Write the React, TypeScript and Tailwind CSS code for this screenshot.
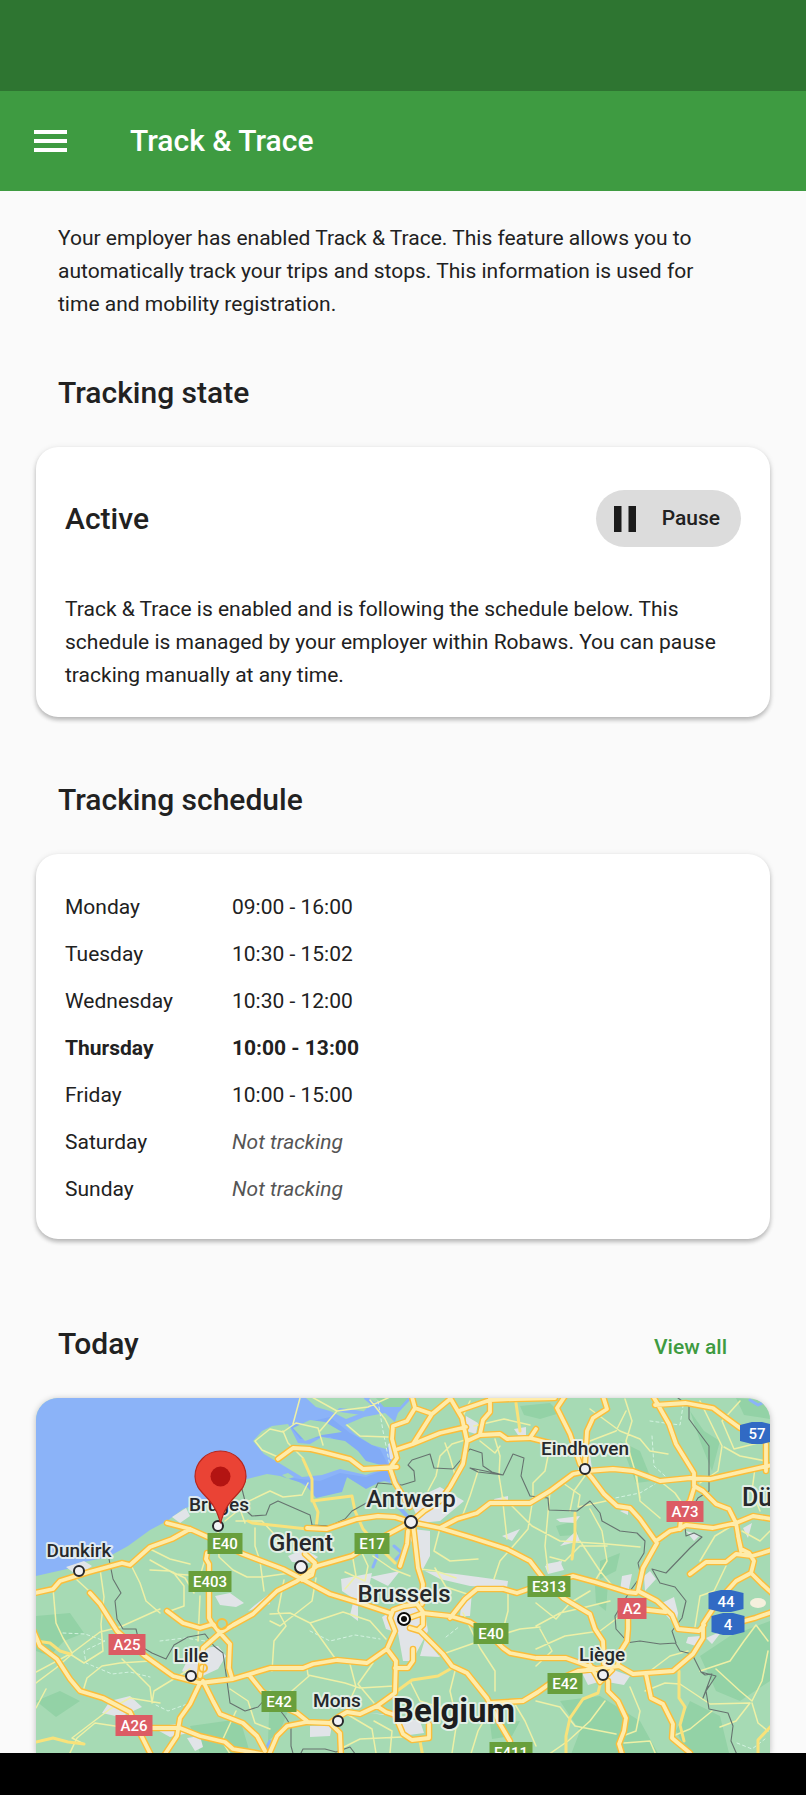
const card = "mt-[36px] rounded-[22px] bg-white px-[29px] shadow-[0_3px_4px_rgba(0,0,0,0.22),0_1px_6px_rgba(0,0,0,0.1)]";
const heading = "text-[30px] leading-[36px] font-medium";

const schedule = [
  { day: "Monday", hours: "09:00 - 16:00" },
  { day: "Tuesday", hours: "10:30 - 15:02" },
  { day: "Wednesday", hours: "10:30 - 12:00" },
  { day: "Thursday", hours: "10:00 - 13:00", today: true },
  { day: "Friday", hours: "10:00 - 15:00" },
  { day: "Saturday", hours: null },
  { day: "Sunday", hours: null },
];

const motorways = [
  "M30 1593L53 1588L60 1580L89 1571L122 1562L130 1564L150 1546L172 1538L190 1528",
  "M167 1522L190 1528L210 1537L243 1553L283 1568L300 1577L330 1593L363 1603L390 1612",
  "M207 1552L206 1558L209 1563V1617L213 1624",
  "M411 1521L383 1536L352 1555L317 1565L297 1580L277 1590L253 1613L233 1624L220 1632L203 1647L200 1675",
  "M305 1553L315 1562L312 1574L302 1579",
  "M167 1610L183 1622L200 1627L213 1623L220 1632L230 1643L229 1667L232 1677",
  "M90 1592L100 1603L117 1630L145 1655L173 1675L200 1682L233 1678L270 1667H303L313 1663L337 1659L367 1662L387 1648",
  "M30 1622L40 1645L57 1658L70 1678L80 1690L103 1697L130 1711L140 1732L152 1756",
  "M200 1682L190 1703L180 1717L177 1735L163 1756",
  "M146 1727H180L200 1735L225 1741L233 1748L262 1753",
  "M203 1680L213 1700L220 1713L243 1722L257 1735L265 1750",
  "M250 1675L262 1690L277 1703L297 1712L307 1720",
  "M268 1756L277 1735L287 1725L307 1721L330 1722L340 1715L347 1711L360 1713L377 1705L395 1692L396 1660L387 1648L395 1630L390 1617L393 1609L404 1605L417 1603L423 1611V1624L418 1629",
  "M330 1722L340 1732L341 1756",
  "M377 1705L386 1711L395 1714L403 1733L412 1739L429 1737V1723",
  "M395 1667H408L413 1660V1648",
  "M412 1616L423 1612L450 1615L470 1621L490 1634L503 1647L510 1652L536 1657H566L580 1662L596 1668L619 1665L633 1673L646 1672L673 1670L693 1653L703 1637L703 1623L718 1600L736 1580L751 1572L754 1560L749 1552L741 1548L738 1535",
  "M751 1572L762 1583L772 1592",
  "M690 1573L706 1561L726 1561L736 1553L752 1555L772 1549",
  "M410 1627L420 1630L443 1653L452 1665L467 1672L487 1697L500 1723L510 1740",
  "M490 1702L523 1700L538 1691L552 1681L578 1670L596 1668",
  "M413 1523L418 1567L423 1583L422 1603",
  "M408 1530L407 1543L400 1565",
  "M450 1617L465 1598L477 1588H503L517 1592L537 1585L573 1575L595 1581L627 1591L636 1592",
  "M411 1521L440 1527L457 1518L477 1512L490 1502H530L550 1490L573 1473L587 1470L613 1468L633 1470L660 1480L690 1477L710 1478L745 1470L772 1464",
  "M440 1527L473 1537L507 1548L530 1560L543 1577L563 1597L590 1613L595 1628L603 1640L604 1663",
  "M603 1395L607 1408L593 1417L587 1430L585 1462",
  "M565 1395L557 1407L570 1433L580 1463L592 1477L604 1493L617 1505L630 1507L640 1518L657 1542L643 1567L638 1590L657 1600L672 1614L678 1628L699 1630L704 1624",
  "M656 1540L670 1530L679 1528L686 1524L713 1527L736 1522L753 1515L772 1518",
  "M653 1395L669 1423L676 1443L694 1472V1485L703 1490L716 1503L729 1508L736 1522L739 1540L741 1550",
  "M694 1487L690 1500L682 1508L680 1528",
  "M655 1404L686 1402L713 1407L725 1416L740 1427",
  "M766 1443V1470",
  "M449 1395L462 1417L467 1440L463 1463L450 1486L440 1500L424 1510L411 1521",
  "M467 1440L480 1434L500 1433L507 1438L530 1437L550 1442",
  "M530 1437L536 1428",
  "M490 1395V1411L483 1419L480 1433",
  "M461 1409L490 1399L515 1398L555 1397",
  "M412 1396L415 1407L407 1420L393 1425L392 1438L397 1457L390 1467L395 1482L410 1506",
  "M450 1398L432 1413L415 1407",
  "M432 1413L413 1443L398 1448",
  "M413 1443L440 1432L466 1426",
  "M278 1458L293 1447L310 1448L323 1451L350 1458L363 1468L397 1466",
  "M307 1527L327 1528L357 1518L378 1515L395 1516L411 1521",
  "M608 1680V1690L618 1700L626 1717L624 1730L619 1743L623 1756",
  "M646 1673L651 1697L663 1703L673 1723L672 1737L690 1752",
  "M628 1610V1628L627 1640L619 1653L618 1664",
  "M640 1608L666 1611",
  "M590 1664L596 1674L600 1681L612 1669",
  "M740 1621L755 1617L772 1611",
];

const regional = [
  "M248 1520L252 1522L280 1525L307 1528",
  "M303 1458L312 1478V1500L352 1495L355 1510L363 1528L378 1545L395 1562",
  "M314 1502L318 1511L316 1527",
  "M575 1512V1535L572 1558",
  "M516 1402L520 1430",
  "M600 1684L598 1692L583 1698L570 1717L566 1735V1756",
  "M679 1670V1697L685 1706L680 1724L684 1740",
  "M36 1741L53 1737L68 1741L84 1743",
  "M36 1640L50 1642L60 1650L70 1653",
  "M397 1690L412 1679L438 1675L452 1667",
  "M420 1740L423 1756",
  "M758 1756V1739L772 1724",
];

const localRoads = [
  "M53 1587L56 1622L63 1637L72 1652L100 1631L120 1626L160 1608",
  "M36 1671L70 1653L84 1662L103 1650L101 1623L104 1596L100 1568",
  "M76 1578L100 1600",
  "M36 1682L56 1667L72 1653",
  "M83 1690L87 1677L102 1665L120 1662L150 1660",
  "M36 1707L46 1688",
  "M84 1743L72 1737L110 1708L130 1697L160 1702",
  "M68 1756L77 1737L95 1722L128 1727",
  "M122 1658L150 1686L152 1702L154 1690L190 1668",
  "M130 1562L140 1582L146 1600L160 1612",
  "M150 1559L175 1573L200 1575L207 1552",
  "M173 1571L184 1585L184 1605L170 1610",
  "M200 1595L198 1640",
  "M218 1530L219 1556L233 1569L247 1576L262 1576L290 1572",
  "M150 1569L170 1570L185 1577L194 1592",
  "M150 1548L170 1558L190 1563",
  "M255 1527V1545L260 1560L264 1590",
  "M236 1520H262L275 1534L280 1549",
  "M245 1502L270 1490L283 1496L302 1494L308 1482",
  "M245 1522L240 1508L225 1520",
  "M255 1440L270 1428L283 1431L296 1422L318 1427L323 1444",
  "M255 1440L262 1449L278 1456",
  "M283 1430L288 1442L303 1457",
  "M300 1397L293 1423",
  "M310 1395L337 1410L320 1430",
  "M337 1410L368 1406L390 1396",
  "M370 1399L385 1418L391 1430",
  "M347 1424L360 1435L388 1436",
  "M284 1579L278 1610L286 1625L274 1640L272 1670",
  "M316 1577L312 1600L280 1625L270 1620",
  "M270 1613L290 1612L310 1622L343 1611L370 1620L386 1638",
  "M307 1667L308 1674L345 1682L360 1687L394 1685",
  "M309 1675L285 1696L270 1690",
  "M350 1663L356 1686L346 1708",
  "M373 1662L358 1683L374 1702",
  "M337 1660L310 1622",
  "M345 1571L365 1580L368 1565L362 1552",
  "M353 1558L356 1575L345 1588",
  "M373 1555L392 1568L410 1575",
  "M420 1568L436 1570L456 1577",
  "M435 1567L446 1586L470 1594",
  "M440 1527L434 1550L450 1560L478 1558",
  "M470 1400L463 1415",
  "M474 1425L504 1418L530 1424",
  "M478 1435L452 1443L440 1455L436 1475L428 1490",
  "M445 1442L450 1456L455 1474",
  "M495 1438L500 1455L499 1475L502 1493L507 1538",
  "M478 1470L470 1495L462 1516",
  "M502 1495L532 1525L560 1540L607 1543L640 1546",
  "M532 1503L528 1528L515 1543L500 1560L494 1578",
  "M480 1440L495 1452L500 1445",
  "M550 1490L545 1545L548 1570",
  "M550 1445L545 1470L533 1482V1500",
  "M590 1408L620 1430L640 1438L650 1450L668 1453",
  "M626 1410L616 1430L590 1440",
  "M625 1398L632 1420L626 1440L635 1470L640 1497",
  "M587 1472L574 1490L570 1510",
  "M563 1482L580 1494L578 1506L606 1500",
  "M636 1470L640 1500L660 1517",
  "M660 1480L675 1492L686 1508",
  "M700 1400L722 1445L718 1470L700 1482",
  "M740 1400L722 1420L734 1448L766 1440",
  "M724 1446L740 1455L766 1460",
  "M755 1467L752 1490L760 1510",
  "M590 1508L602 1530L607 1560L595 1580",
  "M607 1545L580 1545L565 1560L550 1556",
  "M536 1625L560 1612L586 1606L610 1600",
  "M536 1602L556 1618L570 1602L590 1590",
  "M540 1628L552 1650L536 1665",
  "M580 1540L600 1570L615 1588",
  "M440 1654L480 1640L520 1628L540 1626",
  "M463 1612L480 1647L495 1670V1690",
  "M500 1640L508 1610V1588",
  "M455 1670L450 1690L457 1720L452 1752",
  "M410 1680L420 1700L445 1708",
  "M495 1700L478 1730L470 1756",
  "M513 1700L525 1720L536 1745",
  "M345 1712L372 1728L376 1752",
  "M374 1720L392 1730L390 1752",
  "M340 1748L360 1738L402 1736",
  "M236 1710L222 1740L232 1756",
  "M270 1728L255 1722L248 1700L230 1688",
  "M536 1700L560 1706L575 1725L616 1733",
  "M545 1756L568 1740L590 1720L605 1700",
  "M536 1648L565 1635L600 1630L620 1615",
  "M630 1686L640 1710L636 1730L620 1736",
  "M645 1690L665 1682L680 1683L710 1703L750 1702",
  "M624 1742L650 1740L656 1754",
  "M673 1735L690 1728L712 1710",
  "M700 1670L730 1660L744 1640L756 1624L768 1640",
  "M716 1668L740 1690L752 1700L762 1680L768 1650",
  "M750 1702L736 1720L720 1726",
  "M752 1702L758 1722L768 1730",
  "M646 1673L670 1655L688 1650",
  "M695 1626L700 1595L714 1590L726 1565",
  "M700 1560L715 1535L730 1526",
  "M742 1530L760 1540L770 1530",
];

const borders = [
  "M109 1558L113 1578L121 1592L115 1600L117 1618L123 1628H136L140 1645L152 1652L166 1658L174 1644L188 1636L205 1633L214 1645L223 1652L227 1680L230 1702L245 1710L258 1706L268 1695L276 1704L286 1717L291 1725V1745L294 1756",
  "M242 1488L245 1500L240 1504L252 1515L266 1514L270 1504L278 1500L310 1514L312 1524L330 1525L345 1518L352 1510L370 1500L378 1482L402 1484L415 1480L414 1470L408 1464L412 1459L430 1453L434 1467L453 1468L470 1448L482 1452L483 1465L492 1471L503 1474L513 1453L524 1457L521 1475L530 1495L548 1497L549 1509L577 1510L590 1500L600 1512L602 1520L620 1530L637 1532L645 1540L644 1552L638 1562L641 1575L630 1590L615 1615L616 1628L625 1638L626 1642L640 1640L660 1643L676 1642L672 1630L682 1617L686 1600L675 1586L660 1582L652 1568L666 1572L690 1547L702 1536L694 1532L686 1535L685 1526",
  "M470 1467L485 1470L503 1474L478 1471Z",
  "M678 1397L689 1405V1418L703 1437L709 1445V1490L698 1497L690 1510",
  "M676 1643L680 1650L692 1653L701 1671L716 1675L706 1690L709 1708L728 1712L733 1725L731 1740L738 1756",
  "M701 1671L705 1674L712 1673L703 1697L708 1685",
  "M301 1752L303 1748L325 1748L336 1751L350 1746L356 1754",
];

const dashed = [
  "M63 1632L85 1633L105 1640L84 1650L86 1662L112 1673L130 1671L150 1676",
  "M156 1704L168 1710L190 1702",
  "M378 1400L383 1430L390 1465",
  "M650 1420L680 1424L683 1405",
  "M652 1435L654 1465L665 1475",
  "M610 1498L640 1492L655 1483",
  "M310 1630L330 1640L355 1634L380 1638",
  "M446 1636L460 1625",
  "M160 1640L185 1637L205 1640",
  "M737 1742L752 1748L765 1738",
];

const urban = [
  "M66 1566L84 1560L92 1565L78 1575Z",
  "M172 1516L186 1507L190 1515L180 1522Z",
  "M215 1595L230 1592L244 1602L236 1606L220 1604Z",
  "M255 1604L268 1594L270 1603L248 1610Z",
  "M186 1662L200 1648L218 1645L226 1655L218 1668L196 1678L182 1670Z",
  "M110 1700L130 1695L142 1706L120 1716L102 1712Z",
  "M152 1726L178 1723L188 1732L170 1736Z",
  "M187 1737L200 1735L203 1746L195 1750Z",
  "M288 1555L304 1548L318 1556L310 1562L292 1561Z",
  "M388 1443L394 1440L396 1460L390 1458Z",
  "M410 1500L440 1486L464 1500L440 1520L420 1522Z",
  "M404 1527L430 1530L430 1555L422 1570L414 1545Z",
  "M341 1578L372 1572L368 1590L358 1600V1620L350 1614L354 1598L342 1590Z",
  "M370 1576L400 1570L388 1585Z",
  "M382 1616L396 1608L424 1606L428 1630L412 1660L403 1660L398 1632L386 1628Z",
  "M420 1655L425 1638L440 1656Z",
  "M462 1596L472 1590L470 1615L460 1615Z",
  "M425 1570L456 1573L508 1580L507 1587L470 1585L440 1578Z",
  "M466 1415L478 1422L476 1433L466 1430Z",
  "M514 1428L526 1426V1436L518 1434Z",
  "M494 1498L508 1495V1504H496Z",
  "M545 1565L560 1560L564 1569L548 1573Z",
  "M556 1518L580 1515L575 1522L560 1521Z",
  "M582 1440L588 1438L592 1468L578 1470Z",
  "M620 1510L628 1508V1514Z",
  "M622 1575L632 1573L628 1592L620 1590Z",
  "M662 1602L674 1596L678 1612L676 1625L664 1612Z",
  "M644 1575L650 1570L656 1578L645 1590Z",
  "M580 1668L600 1664L630 1675L624 1684L602 1680L588 1684Z",
  "M546 1563L562 1560L560 1569L548 1572Z",
  "M743 1527L752 1522L748 1537Z",
  "M706 1637L722 1630L712 1643Z",
  "M688 1636L700 1635L696 1645L686 1642Z",
  "M310 1725L332 1724L330 1735L310 1736Z",
  "M370 1712L392 1714L402 1735L424 1732L420 1720L398 1716Z",
  "M560 1545L580 1540L576 1530Z",
  "M502 1535L520 1528L512 1540Z",
  "M686 1530L694 1540L700 1534Z",
];

const forests = [
  "M36 1615L70 1612L84 1632L64 1640L50 1655L36 1650Z",
  "M520 1405L550 1402L560 1412L540 1418L524 1414Z",
  "M690 1410L704 1430L720 1440L712 1470L700 1440Z",
  "M556 1525L575 1520L578 1534L560 1535Z",
  "M600 1560L620 1552L616 1570L600 1578Z",
  "M595 1585L608 1582L606 1610L596 1602Z",
  "M700 1655L730 1635L770 1620V1680L740 1700L716 1690Z",
  "M560 1700L600 1695L640 1720L660 1756H570L580 1730Z",
  "M690 1700L720 1715L730 1756H690L676 1730Z",
  "M190 1725L240 1718L250 1752H200Z",
  "M410 1625L420 1632L412 1648L406 1636Z",
  "M270 1690L290 1705L280 1730L268 1740Z",
  "M490 1722L520 1720L512 1735L492 1738Z",
  "M620 1440L640 1450L652 1480L636 1482Z",
  "M36 1700L60 1690L80 1700L56 1716Z",
  "M736 1397L770 1400V1418L744 1414Z",
];

const cities = [
  { name: "Eindhoven", x: 585, y: 1454, size: 19, dot: [585, 1468, 5] },
  { name: "Bruges", x: 219, y: 1510, size: 19, dot: [218, 1525, 5] },
  { name: "Antwerp", x: 411, y: 1506, size: 24, dot: [411, 1521, 6] },
  { name: "Ghent", x: 301, y: 1550, size: 24, dot: [301, 1566, 6] },
  { name: "Dunkirk", x: 79, y: 1556, size: 19, dot: [79, 1570, 5] },
  { name: "Brussels", x: 404, y: 1601, size: 24, dot: null },
  { name: "Lille", x: 191, y: 1661, size: 19, dot: [191, 1675, 5] },
  { name: "Liège", x: 602, y: 1660, size: 19, dot: [603, 1674, 5] },
  { name: "Mons", x: 337, y: 1706, size: 19, dot: [338, 1720, 5] },
  { name: "Dü", x: 757, y: 1505, size: 25, dot: null },
];

const shields = [
  { label: "E40", x: 225, y: 1542, w: 35, kind: "green" },
  { label: "E17", x: 372, y: 1542, w: 35, kind: "green" },
  { label: "E403", x: 210, y: 1580, w: 43, kind: "green" },
  { label: "E313", x: 549, y: 1585, w: 43, kind: "green" },
  { label: "E40", x: 491, y: 1632, w: 35, kind: "green" },
  { label: "E42", x: 565, y: 1682, w: 35, kind: "green" },
  { label: "E42", x: 279, y: 1700, w: 35, kind: "green" },
  { label: "E411", x: 511, y: 1751, w: 43, kind: "green" },
  { label: "A25", x: 127, y: 1643, w: 37, kind: "red" },
  { label: "A26", x: 134, y: 1724, w: 37, kind: "red" },
  { label: "A73", x: 685, y: 1510, w: 37, kind: "red" },
  { label: "A2", x: 632, y: 1607, w: 29, kind: "red" },
  { label: "57", x: 757, y: 1432, w: 34, kind: "blue" },
  { label: "44", x: 726, y: 1600, w: 35, kind: "blue" },
  { label: "4", x: 728, y: 1623, w: 33, kind: "blue" },
];

function Shield({ label, x, y, w, kind }: { label: string; x: number; y: number; w: number; kind: string }) {
  const l = x - w / 2;
  const r = x + w / 2;
  return (
    <g>
      {kind === "blue" ? (
        <path d={`M${l} ${y - 8}L${x - 5} ${y - 11}H${x + 5}L${r} ${y - 8}V${y + 8}L${x + 5} ${y + 11}H${x - 5}L${l} ${y + 8}Z`} fill="#316ac4" />
      ) : (
        <rect x={l} y={y - 10} width={w} height={21} fill={kind === "green" ? "#689f3c" : "#dc5c64"} />
      )}
      <text x={x} y={y + 6} textAnchor="middle" fontSize={15} fontWeight={500} fill="#fff">
        {label}
      </text>
    </g>
  );
}

function TripMap() {
  return (
    <svg
      viewBox="36 1397 734 355"
      className="block h-auto w-full"
      role="img"
      aria-label="Map of Belgium"
      strokeLinejoin="round"
      strokeLinecap="round"
    >
      <rect x="36" y="1397" width="734" height="355" fill="#a6dab4" />
      <path d={forests.join("")} fill="#93d2a6" />
      <path
        d="M36 1397H412L398 1412L388 1440L396 1465L390 1482L378 1478L366 1487L347 1476L340 1490L318 1496L310 1488L293 1477L267 1473L247 1478L225 1490L205 1500L183 1508L167 1520L150 1529L128 1545L108 1556L84 1561L67 1568L36 1575Z"
        fill="#8bb3f8"
      />
      <path d="M280 1475L300 1478L320 1480L340 1472L366 1476L392 1466L396 1478L380 1481L366 1488L347 1476L342 1491L316 1497L305 1483ZM290 1425L300 1438L330 1436L350 1446L368 1462L388 1464L380 1448L350 1432L330 1416Z" fill="#82abf6" />
      <path d="M253 1440L262 1430L272 1425L288 1423L292 1430L298 1442L310 1443L322 1436L345 1440L358 1450L366 1460L388 1466L366 1474L340 1468L322 1474L302 1476L284 1465L264 1453Z" fill="#a6dab4" />
      <path d="M293 1427L310 1419L325 1421L342 1431L322 1434L305 1440Z" fill="#a6dab4" />
      <path d="M306 1397H388L372 1402L362 1412L346 1418L330 1410L316 1406Z" fill="#a6dab4" />
      <path d="M345 1424L364 1416L385 1412L396 1422L393 1440L386 1448L372 1444L356 1434Z" fill="#a6dab4" />
      <path d="M376 1397H408L400 1406H384Z" fill="#93d2a6" />
      <path d="M282 1474L288 1472L294 1476L288 1478Z" fill="#a6dab4" />
      <path d="M366 1397L372 1402M340 1409L362 1412M390 1468L399 1485L398 1505L408 1516" fill="none" stroke="#8bb3f8" strokeWidth="4" />
      <path d="M375 1545L377 1556L373 1566M394 1545L402 1552L396 1558M750 1399L758 1404L766 1400M266 1748L270 1740" fill="none" stroke="#8bb3f8" strokeWidth="3" />
      <path d={urban.join("")} fill="#e1e4e8" />
      <ellipse cx="758" cy="1602" rx="8" ry="5" fill="#f5f0dd" />

      <g fill="none">
        <path d={dashed.join("")} stroke="#d3f3e0" strokeWidth="1" strokeDasharray="3 3" />
        <path d={localRoads.join("")} stroke="#eef0a6" strokeWidth="1.5" />
        <path d={regional.join("")} stroke="#f9e27a" strokeWidth="3" />
        <path d={borders.join("")} stroke="#66736f" strokeWidth="1.1" />
        <path d={motorways.join("")} stroke="#fbbd3a" strokeWidth="6.6" />
        <path d={motorways.join("")} stroke="#ffecaa" strokeWidth="3.8" />
        <circle cx="222" cy="1623" r="5" stroke="#fbbd3a" strokeWidth="2" />
        <circle cx="203" cy="1667" r="4" stroke="#fbbd3a" strokeWidth="2" />
      </g>

      <g fontFamily="Roboto, sans-serif">
        {cities.map((c) => (
          <g key={c.name}>
            {c.dot && <circle cx={c.dot[0]} cy={c.dot[1]} r={c.dot[2]} fill="#f1f1f4" stroke="#26272a" strokeWidth="2" />}
            <text
              x={c.x}
              y={c.y}
              textAnchor="middle"
              fontSize={c.size}
              fontWeight={500}
              fill="#26282b"
              stroke="#eef3f0"
              strokeWidth="4"
              strokeOpacity="0.85"
              paintOrder="stroke"
            >
              {c.name}
            </text>
          </g>
        ))}
        <circle cx="404" cy="1618" r="6" fill="#fff" stroke="#0c0c0c" strokeWidth="2" />
        <circle cx="404" cy="1618" r="3" fill="#0c0c0c" />
        <text x="454" y="1721" textAnchor="middle" fontSize="33" fontWeight="700" fill="#1c1d1f" stroke="#eef3f0" strokeWidth="4" strokeOpacity="0.85" paintOrder="stroke">
          Belgium
        </text>
        {shields.map((s) => (
          <Shield key={s.label + s.x} {...s} />
        ))}
      </g>

      <path
        d="M220.500 1522C218 1514 216 1507 209 1499C202 1491 195 1486 195 1475.500A25.500 25.500 0 0 1 246 1475.500C246 1486 239 1491 232 1499C225 1507 223 1514 220.500 1522Z"
        fill="#ea4335"
        stroke="#b7271d"
        strokeWidth="1.2"
      />
      <circle cx="220.500" cy="1475.500" r="10" fill="#b31412" />
    </svg>
  );
}

export default function App() {
  return (
    <div className="flex min-h-screen flex-col bg-[#fafafa] font-['Roboto',sans-serif] text-[21px] leading-[33px] text-[#212121]">
      <div className="h-[91px] shrink-0 bg-[#2e7531]" />
      <header className="flex h-[100px] shrink-0 items-center gap-[63px] bg-[#3e9b41] px-[34px] text-white">
        <button type="button" aria-label="Open menu" className="flex w-[33px] flex-col gap-[5px]">
          <span className="h-[4px] w-full bg-white" />
          <span className="h-[4px] w-full bg-white" />
          <span className="h-[4px] w-full bg-white" />
        </button>
        <h1 className={heading}>Track &amp; Trace</h1>
      </header>

      <main className="flex flex-1 flex-col px-[36px] pt-[31px]">
        <p className="pr-[43px] pl-[22px]">
          Your employer has enabled Track &amp; Trace. This feature allows you to automatically track your trips and stops. This
          information is used for time and mobility registration.
        </p>

        <section className="pt-[54px]">
          <h2 className={`${heading} px-[22px]`}>Tracking state</h2>
          <div className={`${card} pt-[43px] pb-[25px]`}>
            <div className="flex items-center justify-between">
              <h3 className={heading}>Active</h3>
              <button type="button" className="flex h-[57px] items-center gap-[26px] rounded-full bg-[#dcdcdc] pr-[21px] pl-[18px] font-medium">
                <svg viewBox="0 0 22 26" className="h-[26px] w-[22px]" fill="#1b1b1b" aria-hidden="true">
                  <path d="M0 0h7.500v26H0zM14.500 0H22v26h-7.500z" />
                </svg>
                Pause
              </button>
            </div>
            <p className="mt-[46px]">
              Track &amp; Trace is enabled and is following the schedule below. This schedule is managed by your employer within
              Robaws. You can pause tracking manually at any time.
            </p>
          </div>
        </section>

        <section className="pt-[65px]">
          <h2 className={`${heading} px-[22px]`}>Tracking schedule</h2>
          <div className={`${card} pt-[30px] pb-[26px]`}>
            <table className="w-full text-left">
              <tbody>
                {schedule.map((row) => (
                  <tr key={row.day} className={row.today ? "h-[47px] font-bold" : "h-[47px] font-normal"}>
                    <th scope="row" className="w-[167px] p-0 text-left [font-weight:inherit]">
                      {row.day}
                    </th>
                    <td className="p-0">{row.hours ?? <em className="text-[#555555]">Not tracking</em>}</td>
                  </tr>
                ))}
              </tbody>
            </table>
          </div>
        </section>

        <section className="pt-[87px]">
          <div className="flex items-baseline justify-between pr-[43px] pl-[22px]">
            <h2 className={heading}>Today</h2>
            <a href="#trips" className="font-medium text-[#3e9b41]">
              View all
            </a>
          </div>
          <div className="mt-[34px] overflow-hidden rounded-t-[22px] shadow-[0_1px_6px_rgba(0,0,0,0.25)]">
            <TripMap />
          </div>
        </section>
      </main>

      <div className="h-[43px] shrink-0 bg-black" />
    </div>
  );
}
